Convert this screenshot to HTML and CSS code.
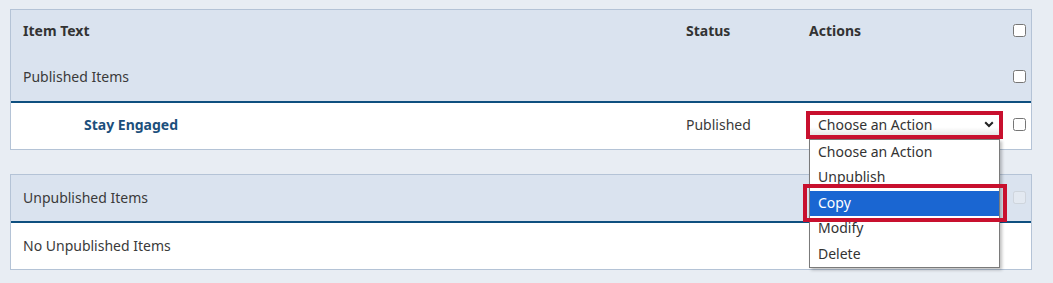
FILE: index.html
```html
<!DOCTYPE html>
<html>
<head>
<meta charset="utf-8">
<link rel="stylesheet" href="styles.css">
</head>
<body>
<div class="panel">
  <div class="panel-head">
    <div class="row row-top">
      <div class="cell th">Item Text</div>
      <div class="cell th">Status</div>
      <div class="cell th">Actions</div>
      <div class="cell chk"><input type="checkbox"></div>
    </div>
    <div class="row row-group">
      <div class="cell">Published Items</div>
      <div class="cell"></div>
      <div class="cell"></div>
      <div class="cell chk"><input type="checkbox"></div>
    </div>
  </div>
  <div class="row row-item">
    <div class="cell item-name">Stay Engaged</div>
    <div class="cell">Published</div>
    <div class="cell">
      <div class="select">
        <span class="select-text">Choose an Action</span>
        <svg class="chev" width="10" height="7" viewBox="0 0 10 7"><path d="M1.2 1.2 L5 5 L8.8 1.2" fill="none" stroke="#222" stroke-width="2"/></svg>
        <ul class="options">
          <li>Choose an Action</li>
          <li>Unpublish</li>
          <li class="selected">Copy</li>
          <li>Modify</li>
          <li>Delete</li>
        </ul>
      </div>
    </div>
    <div class="cell chk"><input type="checkbox"></div>
  </div>
</div>

<div class="panel panel2">
  <div class="panel-head">
    <div class="row row-group2">
      <div class="cell">Unpublished Items</div>
      <div class="cell"></div>
      <div class="cell"></div>
      <div class="cell chk"><input type="checkbox" disabled></div>
    </div>
  </div>
  <div class="row row-empty">
    <div class="cell">No Unpublished Items</div>
  </div>
</div>
</body>
</html>
```

FILE: styles.css
```css
* { box-sizing: border-box; }
html, body { margin: 0; padding: 0; }
body {
  background: #e8edf3;
  font-family: "Noto Sans", "Open Sans", sans-serif;
  font-size: 14px;
  color: #3a3a3a;
  padding: 9px 22px 0 10px;
  width: 1053px;
  height: 283px;
  overflow: hidden;
}
.panel {
  background: #fff;
  border: 1px solid #b4c3d6;
  width: 1022px;
}
.panel2 { margin-top: 24px; }
.panel-head {
  background: #dae3ef;
  border-bottom: 2px solid #0e4f7f;
}
.row {
  display: grid;
  grid-template-columns: 663px 123px 204px 13px;
  padding: 0 5px 0 12px;
  align-items: center;
}
.row-top { height: 43px; padding-bottom: 2px; }
.row-group { height: 48px; padding-bottom: 2px; }
.row-item { height: 46px; padding-bottom: 3px; }
.row-group2 { height: 46px; padding-bottom: 2px; }
.row-empty { height: 46px; padding-bottom: 2px; display: flex; align-items: center; }
.cell { white-space: nowrap; }
.th { font-weight: 700; color: #333; }
.item-name {
  padding-left: 61px;
  font-weight: 700;
  color: #1c4f7c;
}
.chk { display: flex; align-items: center; }
.chk input {
  margin: 0;
  width: 13px;
  height: 13px;
}
.select {
  position: relative;
  width: 191px;
  height: 22px;
  background: linear-gradient(#fff 0%, #fff 60%, #e4e4e4 100%);
  display: flex;
  align-items: center;
  padding: 0 0 1px 9px;
  color: #333;
}
.select::before {
  content: "";
  position: absolute;
  left: -3px; top: -3px; right: -3px; bottom: -3px;
  border: 4px solid #c8102e;
}
.select-text { flex: 1; }
.chev { margin-right: 6px; }
.options {
  position: absolute;
  left: 0;
  top: 25px;
  width: 191px;
  margin: 0;
  padding: 0;
  list-style: none;
  background: #fff;
  border: 1px solid #7a7a7a;
  box-shadow: 2px 2px 3px rgba(0,0,0,0.25);
  z-index: 2;
}
.options li {
  height: 25.6px;
  line-height: 23px;
  padding-left: 8px;
  color: #333;
  position: relative;
}
.options li.selected {
  background: #1a66d2;
  color: #fff;
}
.options li.selected::after {
  content: "";
  position: absolute;
  left: -7px; top: -7px; right: -8px; bottom: -6px;
  border: 4px solid #c8102e;
}
.chk input[disabled] { opacity: 0.5; }
```
